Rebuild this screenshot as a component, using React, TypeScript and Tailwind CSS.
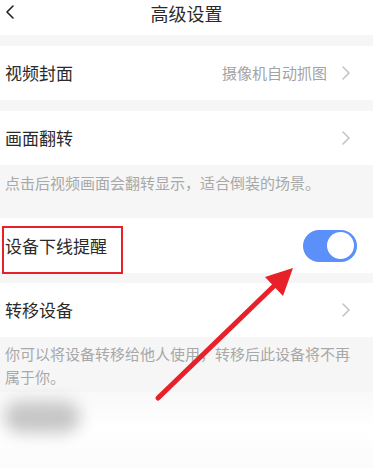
import React from "react";

const font = { fontFamily: '"Noto Sans CJK SC", "Noto Sans", sans-serif' };

function Chevron() {
  return (
    <svg width="10" height="16" viewBox="0 0 10 16" className="shrink-0">
      <path d="M2 2 L8 8 L2 14" fill="none" stroke="#c4c4c4" strokeWidth="1.6" strokeLinecap="round" strokeLinejoin="round" />
    </svg>
  );
}

function Row({ label, value, right, h = "h-[54px]" }: { label: string; value?: string; right?: React.ReactNode; h?: string }) {
  return (
    <div className={`flex ${h} items-center justify-between bg-white pl-[5px] pr-[22px]`}>
      <span className="text-[17px] text-[#2a2a2a]">{label}</span>
      <div className="flex items-center gap-[14px]">
        {value && <span className="text-[15px] text-[#a3a3a3]">{value}</span>}
        {right ?? <Chevron />}
      </div>
    </div>
  );
}

export default function App() {
  return (
    <div className="relative h-[468px] w-[373px] overflow-hidden bg-white" style={font}>
      <div className="relative h-[35px] bg-white">
        <svg className="absolute left-[4px] top-[4px]" width="12" height="16" viewBox="0 0 12 16">
          <path d="M9 2 L3 8 L9 14" fill="none" stroke="#222" strokeWidth="1.6" strokeLinecap="round" strokeLinejoin="round" />
        </svg>
        <div className="text-center text-[18px] leading-[26px] text-[#2a2a2a]">高级设置</div>
      </div>
      <div className="h-[11px] bg-[#f6f6f6]" />
      <Row label="视频封面" value="摄像机自动抓图" />
      <div className="h-[11px] bg-[#f6f6f6]" />
      <Row label="画面翻转" />
      <div className="h-[53px] bg-[#f6f6f6] pl-[5px] pt-[8px] text-[15px] leading-[20px] text-[#a8a8a8]">
        点击后视频画面会翻转显示，适合倒装的场景。
      </div>
      <Row
        label="设备下线提醒"
        h="h-[55px]"
        right={
          <div className="mr-[-6px] flex h-[32px] w-[54px] items-center justify-end rounded-full bg-[#5b8ff9] pr-[3px]">
            <div className="h-[27px] w-[27px] rounded-full bg-white" />
          </div>
        }
      />
      <div className="h-[10px] bg-[#f6f6f6]" />
      <Row label="转移设备" />
      <div className="h-[55px] bg-[#f6f6f6] pl-[5px] pr-[18px] pt-[5px] text-[15px] leading-[23px] text-[#a8a8a8]">
        你可以将设备转移给他人使用，转移后此设备将不再属于你。
      </div>
      <div className="relative h-[76px] bg-gradient-to-b from-[#f9f9f9] via-white to-[#fbfbfb]">
        <div className="absolute left-[4px] top-[9px] h-[32px] w-[76px] rounded-full bg-[#c6c6c6] blur-[8px]" />
      </div>

      <div className="absolute left-[2px] top-[226px] h-[48px] w-[121px] border-2 border-[#e8202a]" />
      <svg className="absolute left-0 top-0" width="373" height="468" viewBox="0 0 373 468">
        <line x1="158" y1="398" x2="276" y2="284" stroke="#e8202a" strokeWidth="5" strokeLinecap="round" />
        <polygon points="293,268 265,277 283,296" fill="#e8202a" />
      </svg>
    </div>
  );
}
